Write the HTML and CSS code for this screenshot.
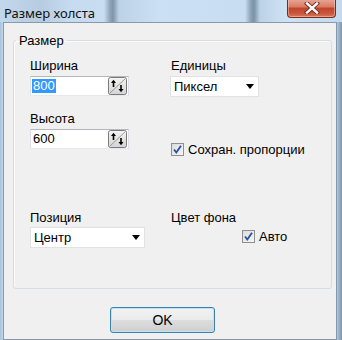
FILE: index.html
```html
<!DOCTYPE html>
<html lang="ru">
<head>
    <meta charset="UTF-8">
    <title>Размер холста</title>
    <link rel="stylesheet" href="styles.css">
</head>
<body>

    <div class="window">
        <div class="titlebar">
            <span class="title">Размер холста</span>
            <button class="close" type="button" aria-label="Закрыть">
                <svg width="16" height="12" viewBox="0 0 16 12">
                    <path d="M3 1.5 L13 10.5 M13 1.5 L3 10.5" stroke="#6b2a1e" stroke-width="4.2" stroke-linecap="square"/>
                    <path d="M3 1.5 L13 10.5 M13 1.5 L3 10.5" stroke="#ffffff" stroke-width="2.4" stroke-linecap="square"/>
                </svg>
            </button>
        </div>

        <div class="client">
            <fieldset class="group">
                <legend>Размер</legend>
                <div class="grid">

                    <div class="field">
                        <label for="width">Ширина</label>
                        <div class="spin-input" id="width">
                            <span class="value selected">800</span>
                            <span class="spin">
                                <svg width="19" height="18" viewBox="0 0 19 18">
                                    <defs>
                                        <linearGradient id="sg" x1="0" y1="0" x2="0" y2="1">
                                            <stop offset="0" stop-color="#f4f4f4"/>
                                            <stop offset="1" stop-color="#d4d4d4"/>
                                        </linearGradient>
                                    </defs>
                                    <rect x="0.5" y="0.5" width="18" height="17" rx="2" fill="url(#sg)" stroke="#7a7a7a"/>
                                    <path d="M2 16 L17 2" stroke="#9a9a9a" stroke-width="1"/>
                                    <path d="M5.5 4 L5.5 10" stroke="#000" stroke-width="1.6"/>
                                    <path d="M3 6 L5.5 2.8 L8 6 Z" fill="#000"/>
                                    <path d="M13 8 L13 14" stroke="#000" stroke-width="1.6"/>
                                    <path d="M10.5 12 L13 15.2 L15.5 12 Z" fill="#000"/>
                                </svg>
                            </span>
                        </div>
                    </div>

                    <div class="field">
                        <label for="units">Единицы</label>
                        <div class="select units" id="units">
                            <span>Пиксел</span>
                            <span class="arrow"></span>
                        </div>
                    </div>

                    <div class="field">
                        <label for="height">Высота</label>
                        <div class="spin-input" id="height">
                            <span class="value">600</span>
                            <span class="spin">
                                <svg width="19" height="18" viewBox="0 0 19 18">
                                    <rect x="0.5" y="0.5" width="18" height="17" rx="2" fill="url(#sg)" stroke="#7a7a7a"/>
                                    <path d="M2 16 L17 2" stroke="#9a9a9a" stroke-width="1"/>
                                    <path d="M5.5 4 L5.5 10" stroke="#000" stroke-width="1.6"/>
                                    <path d="M3 6 L5.5 2.8 L8 6 Z" fill="#000"/>
                                    <path d="M13 8 L13 14" stroke="#000" stroke-width="1.6"/>
                                    <path d="M10.5 12 L13 15.2 L15.5 12 Z" fill="#000"/>
                                </svg>
                            </span>
                        </div>
                    </div>

                    <div class="field keep">
                        <label class="check">
                            <span class="box">
                                <svg width="11" height="11" viewBox="0 0 11 11">
                                    <path d="M2 5.5 L4.3 8.5 L9 1.8" fill="none" stroke="#2a4fa8" stroke-width="1.8"/>
                                </svg>
                            </span>
                            Сохран. пропорции
                        </label>
                    </div>

                    <div class="field lower">
                        <label for="position">Позиция</label>
                        <div class="select position" id="position">
                            <span>Центр</span>
                            <span class="arrow"></span>
                        </div>
                    </div>

                    <div class="field lower">
                        <label>Цвет фона</label>
                        <label class="check auto">
                            <span class="box">
                                <svg width="11" height="11" viewBox="0 0 11 11">
                                    <path d="M2 5.5 L4.3 8.5 L9 1.8" fill="none" stroke="#2a4fa8" stroke-width="1.8"/>
                                </svg>
                            </span>
                            Авто
                        </label>
                    </div>

                </div>
            </fieldset>

            <div class="buttons">
                <button class="ok" type="button">OK</button>
            </div>
        </div>
    </div>

</body>
</html>
```

FILE: styles.css
```css
* {
    box-sizing: border-box;
}
body {
    margin: 0;
    font-family: "Liberation Sans", Arial, sans-serif;
    font-size: 13px;
    color: #000;
}
.window {
    width: 342px;
    height: 340px;
    display: flex;
    flex-direction: column;
    padding: 0 5px 4px 3px;
    background: linear-gradient(to right, #a9c1d9 0, #c2d8ee 3px, #c9ddf1 50%, #c2d8ee 98%, #7d93a8 100%);
    overflow: hidden;
}
.titlebar {
    height: 26px;
    margin: 0 -5px 0 -3px;
    padding-left: 4px;
    display: flex;
    align-items: flex-start;
    background: linear-gradient(to right,
        #c3d8ec 0, #b7cce0 40px, #c6dbef 70px, #c8ddf1 104px,
        #8fa5ba 110px, #7f95aa 113px, #bcd2e8 119px, #cbe0f4 160px,
        #c8ddf1 245px, #8aa0b5 251px, #7c92a7 254px, #bcd2e8 260px,
        #cfe2f4 285px, #c4d9ee 342px);
}
.title {
    font-family: "Noto Sans", sans-serif;
    font-size: 13px;
    line-height: 18px;
    margin-top: 4px;
    color: #111;
}
.close {
    margin-left: auto;
    margin-right: 6px;
    margin-top: -1px;
    width: 49px;
    height: 19px;
    padding: 0;
    border: 1px solid #7c2a1c;
    border-top: none;
    border-radius: 0 0 4px 4px;
    background: linear-gradient(#e8a898 0, #d87a63 45%, #c2432b 50%, #c9573c 80%, #d9795a 100%);
    box-shadow: inset 0 0 0 1px rgba(255, 220, 200, 0.45);
    display: flex;
    align-items: center;
    justify-content: center;
}
.client {
    flex: 1;
    background-color: #f0f0f0;
    border: 1px solid #8799ac;
    padding: 0 4px 6px 9px;
}
.group {
    margin: 10px 0 0 0;
    padding: 10px 0 40px 0;
    border: 1px solid #d5dce2;
    border-radius: 3px;
    box-shadow: inset 1px 1px 0 #fbfbfb;
}
.group legend {
    margin-left: 2px;
    padding: 0 3px;
    line-height: 15px;
}
.grid {
    display: grid;
    grid-template-columns: 141px 1fr;
    row-gap: 14px;
    padding-left: 16px;
}
.field {
    display: flex;
    flex-direction: column;
    align-items: flex-start;
    gap: 3px;
}
.field label {
    line-height: 15px;
}
.lower {
    margin-top: 39px;
    gap: 2px;
}
.spin-input {
    width: 99px;
    height: 20px;
    display: flex;
    align-items: center;
    padding: 0 1px 0 1px;
    background-color: #fff;
    border: 1px solid;
    border-color: #b3b6bd #dde1e7 #e5e9ee #dde1e7;
}
.value {
    line-height: 14px;
    padding: 0 1px;
}
.selected {
    background-color: #3399ff;
    color: #fff;
}
.spin {
    margin-left: auto;
    display: flex;
}
.select {
    height: 21px;
    display: flex;
    align-items: center;
    padding: 0 4px 0 3px;
    background-color: #fff;
    border: 1px solid #e2e2e2;
}
.units {
    width: 89px;
    margin-left: -1px;
}
.position {
    width: 115px;
}
.arrow {
    margin-left: auto;
    width: 0;
    height: 0;
    border-left: 4px solid transparent;
    border-right: 4px solid transparent;
    border-top: 5px solid #000;
}
.check {
    display: flex;
    align-items: center;
    gap: 4px;
}
.box {
    width: 13px;
    height: 13px;
    border: 1px solid #8e8f8f;
    background: linear-gradient(135deg, #dcdcdc, #f6f6f6);
    display: flex;
    align-items: center;
    justify-content: center;
}
.keep {
    padding-top: 31px;
}
.auto {
    margin-top: 2px;
    margin-left: 71px;
}
.buttons {
    margin-top: 18px;
    padding-left: 97px;
}
.ok {
    width: 105px;
    height: 26px;
    font-family: "Liberation Sans", Arial, sans-serif;
    font-size: 14px;
    border: 1px solid #3c7fb1;
    border-radius: 3px;
    background: linear-gradient(#f2f2f2 0, #ebebeb 50%, #dddddd 51%, #cfcfcf 100%);
    box-shadow: inset 0 0 0 1px #bde4f5;
    color: #000;
}
```
